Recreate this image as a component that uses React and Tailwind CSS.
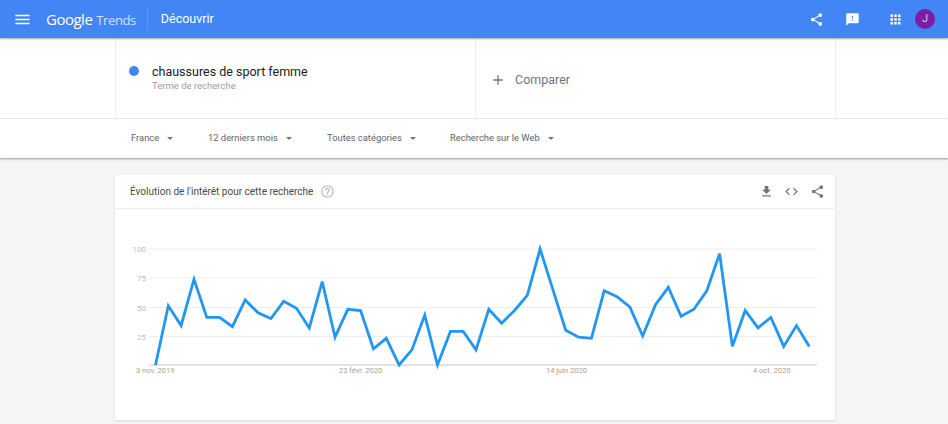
const vals = [0,51,34,74,41,41,33,56,45,40,55,49,32,72,24,48,47,14,23,0,13,43,0,29,29,13,48,36,47,60,100,65,30,24,23,64,59,50,25,52,67,42,48,64,96,16,47,32,41,16,34,16];
const pts = vals.map((v, i) => `${(155.5 + i * 12.82).toFixed(1)},${(365 - v * 1.16).toFixed(1)}`).join(" ");

const P = {
  share: "M18 16.08c-.76 0-1.44.3-1.96.77L8.91 12.7c.05-.23.09-.46.09-.7s-.04-.47-.09-.7l7.05-4.11c.54.5 1.25.81 2.04.81 1.66 0 3-1.34 3-3s-1.34-3-3-3-3 1.34-3 3c0 .24.04.47.09.7L8.04 9.81C7.5 9.31 6.79 9 6 9c-1.66 0-3 1.34-3 3s1.34 3 3 3c.79 0 1.5-.31 2.04-.81l7.12 4.16c-.05.21-.08.43-.08.65 0 1.61 1.31 2.92 2.92 2.92 1.61 0 2.92-1.31 2.92-2.92s-1.31-2.92-2.92-2.92z",
  feedback: "M20 2H4c-1.1 0-1.99.9-1.99 2L2 22l4-4h14c1.1 0 2-.9 2-2V4c0-1.1-.9-2-2-2zm-7 12h-2v-2h2v2zm0-4h-2V6h2v4z",
  apps: "M4 8h4V4H4v4zm6 12h4v-4h-4v4zm-6 0h4v-4H4v4zm0-6h4v-4H4v4zm6 0h4v-4h-4v4zm6-10v4h4V4h-4zm-6 4h4V4h-4v4zm6 6h4v-4h-4v4zm0 6h4v-4h-4v4z",
  menu: "M3 18h18v-2H3v2zm0-5h18v-2H3v2zm0-7v2h18V6H3z",
  download: "M19 9h-4V3H9v6H5l7 7 7-7zM5 18v2h14v-2H5z",
  code: "M9.4 16.6L4.8 12l4.6-4.6L8 6l-6 6 6 6 1.4-1.4zm5.2 0l4.6-4.6-4.6-4.6L16 6l6 6-6 6-1.4-1.4z",
  help: "M11 18h2v-2h-2v2zm1-16C6.48 2 2 6.48 2 12s4.48 10 10 10 10-4.48 10-10S17.52 2 12 2zm0 18c-4.41 0-8-3.59-8-8s3.59-8 8-8 8 3.59 8 8-3.59 8-8 8zm0-14c-2.21 0-4 1.79-4 4h2c0-1.1.9-2 2-2s2 .9 2 2c0 2-3 1.75-3 5h2c0-2.25 3-2.5 3-5 0-2.21-1.79-4-4-4z",
  plus: "M19 13h-6v6h-2v-6H5v-2h6V5h2v6h6v2z",
};

function Icon({ d, className }) {
  return (
    <svg viewBox="0 0 24 24" fill="currentColor" className={className}>
      <path d={d} />
    </svg>
  );
}

function Filter({ label, className }) {
  return (
    <div className={`flex items-center ${className}`}>
      <span className="text-[9.4px] leading-none text-[#5f6368]">{label}</span>
      <span className="ml-[8px] h-0 w-0 border-x-[3.5px] border-t-[3.5px] border-x-transparent border-t-[#757575]" />
    </div>
  );
}

export default function App() {
  return (
    <div className="h-[424px] w-[948px] overflow-hidden bg-[#f5f5f5] font-['Roboto',sans-serif]">
      <header className="relative z-20 flex h-[38px] items-center bg-[#4285f4] text-white shadow-[0_1px_2px_rgba(0,0,0,0.35)]">
        <Icon d={P.menu} className="ml-[13px] h-[19px] w-[19px]" />
        <div className="ml-[14px] flex items-baseline font-['Open_Sans',sans-serif] leading-none">
          <span className="text-[15px] font-normal tracking-[-0.5px]">Google</span>
          <span className="ml-[4px] text-[13px] font-normal tracking-[-0.4px] opacity-75">Trends</span>
        </div>
        <div className="ml-[11px] h-[22px] w-px bg-white/15" />
        <span className="ml-[13px] text-[12.5px] font-normal leading-none">Découvrir</span>
        <div className="ml-auto flex items-center">
          <Icon d={P.share} className="h-[15px] w-[15px]" />
          <Icon d={P.feedback} className="ml-[21px] h-[15px] w-[15px]" />
          <Icon d={P.apps} className="ml-[28px] h-[15px] w-[15px]" />
          <div className="ml-[12px] mr-[13px] flex h-5 w-5 items-center justify-center rounded-full bg-[#7b1fa2] text-[11px] text-[#e1bee7]">J</div>
        </div>
      </header>

      <section className="flex h-[81px] border-b border-[#eeeeee] bg-white">
        <div className="w-[115px]" />
        <div className="flex w-[360px] border-l border-[#eeeeee]">
          <span className="ml-[13px] mt-[28px] h-[10px] w-[10px] rounded-full bg-[#4285f4]" />
          <div className="ml-[13px] mt-[26px]">
            <div className="text-[12.5px] font-normal leading-[15px] text-[#202124]">chaussures de sport femme</div>
            <div className="mt-[1px] text-[9.5px] leading-[12px] text-[#9e9e9e]">Terme de recherche</div>
          </div>
        </div>
        <div className="flex w-[361px] items-center border-x border-[#eeeeee] pt-[4px]">
          <Icon d={P.plus} className="ml-[14px] h-[16px] w-[16px] text-[#757575]" />
          <span className="ml-[9px] text-[12.5px] font-normal text-[#757575]">Comparer</span>
        </div>
      </section>

      <section className="relative z-10 flex h-[39px] items-center bg-white pb-[1px] pl-[131px] shadow-[0_1px_2px_rgba(0,0,0,0.4)]">
        <Filter label="France" className="w-[77px]" />
        <Filter label="12 derniers mois" className="w-[119px]" />
        <Filter label="Toutes catégories" className="w-[123px]" />
        <Filter label="Recherche sur le Web" />
      </section>

      <main className="ml-[115px] mt-[17px] h-[245px] w-[720px] bg-white shadow-[0_1px_2px_rgba(0,0,0,0.12)]">
        <div className="flex h-[34px] items-center border-b border-[#eeeeee] pl-[15px] pr-[10px]">
          <span className="text-[10px] leading-none text-[#4a4a4a]">Évolution de l'intérêt pour cette recherche</span>
          <Icon d={P.help} className="ml-[7px] h-[15px] w-[15px] text-[#bdbdbd]" />
          <Icon d={P.download} className="ml-auto h-[15px] w-[15px] text-[#757575]" />
          <Icon d={P.code} className="ml-[10px] h-[15px] w-[15px] text-[#757575]" />
          <Icon d={P.share} className="ml-[11px] h-[15px] w-[15px] text-[#757575]" />
        </div>
        <svg viewBox="115 209 720 211" className="block h-[211px] w-[720px]">
          {[249, 278, 307.5, 336.5].map((y) => (
            <line key={y} x1="149" x2="817" y1={y} y2={y} stroke="#eeeeee" strokeWidth="1" />
          ))}
          <line x1="149" x2="817" y1="365" y2="365" stroke="#d9d9d9" strokeWidth="1.5" />
          {[[100, 252], [75, 281], [50, 310.5], [25, 339.5]].map(([t, y]) => (
            <text key={t} x="146" y={y} textAnchor="end" fontSize="8" fill="#bdbdbd">{t}</text>
          ))}
          {[["3 nov. 2019", 136], ["23 févr. 2020", 339], ["14 juin 2020", 546], ["4 oct. 2020", 753]].map(([t, x]) => (
            <text key={t} x={x} y="373" fontSize="7.5" fill="#a89f94">{t}</text>
          ))}
          <polyline points={pts} fill="none" stroke="#2196f3" strokeWidth="2.8" strokeLinejoin="miter" />
        </svg>
      </main>
    </div>
  );
}
